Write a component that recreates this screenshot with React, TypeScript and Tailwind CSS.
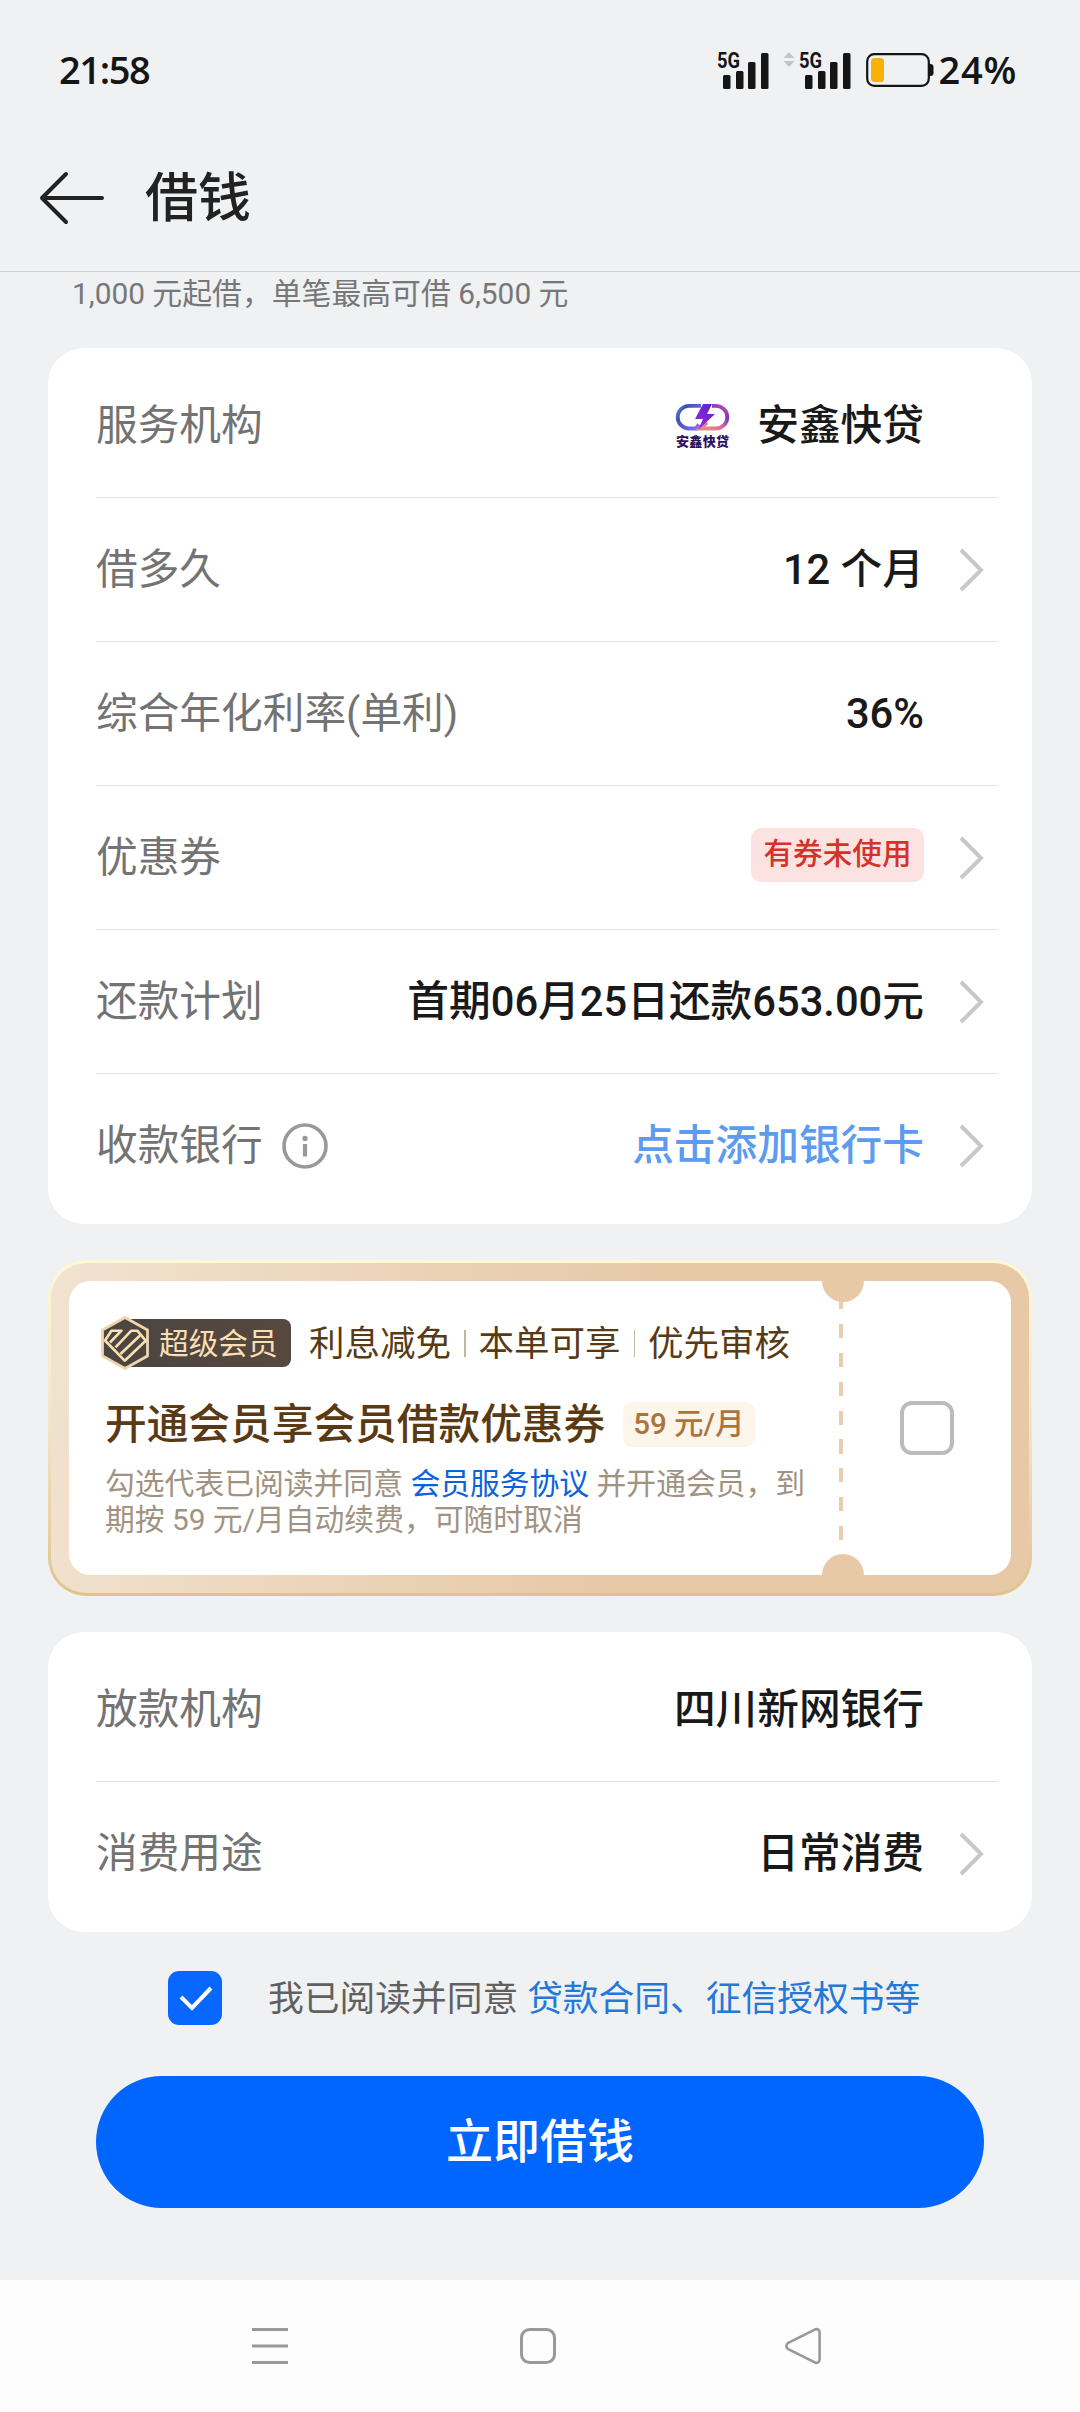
import React from "react";
import { twMerge } from "tailwind-merge";

function SignalIcon() {
  return (
    <svg width="54" height="40" viewBox="0 0 54 40" className="shrink-0 overflow-visible">
      <text
        x="0"
        y="18"
        textLength="23"
        lengthAdjust="spacingAndGlyphs"
        className="fill-[#151515] font-['Roboto',sans-serif] text-[22px] font-bold leading-none"
      >
        5G
      </text>
      <g fill="#151515">
        <rect x="6" y="25" width="7.5" height="14" rx="1.5" />
        <rect x="19" y="21" width="7.5" height="18" rx="1.5" />
        <rect x="31" y="12" width="7.5" height="27" rx="1.5" />
        <rect x="44" y="3" width="7.5" height="36" rx="1.5" />
      </g>
    </svg>
  );
}

function DataArrows() {
  return (
    <svg width="12" height="16" viewBox="0 0 12 16" className="mb-5 shrink-0">
      <path d="M6 0l5.5 6H.5zM6 15L.5 9h11z" fill="#c4c4c6" />
    </svg>
  );
}

function BatteryIcon() {
  return (
    <svg width="68" height="36" viewBox="0 0 68 36" className="shrink-0">
      <rect
        x="1.2"
        y="2.2"
        width="61.6"
        height="31.6"
        rx="7"
        fill="none"
        stroke="#151515"
        strokeWidth="2.2"
      />
      <path d="M63 12h1.5a3 3 0 0 1 3 3v6a3 3 0 0 1-3 3H63z" fill="#151515" />
      <rect x="5" y="6" width="13" height="24" rx="3.5" fill="#fbb103" />
    </svg>
  );
}

function StatusBar() {
  return (
    <div className="flex h-[140px] items-center justify-between pl-[59px] pr-[63px] font-['Open_Sans','Noto_Sans',sans-serif] text-[38px] font-semibold leading-none text-[#151515]">
      <span className="-mt-[3px] tracking-[-1.4px]">21:58</span>
      <div className="flex items-center">
        <SignalIcon />
        <div className="ml-3 mr-[13px] flex items-center gap-1">
          <DataArrows />
          <SignalIcon />
        </div>
        <BatteryIcon />
        <span className="-mt-[2px] ml-[5px] tracking-[0.7px]">24%</span>
      </div>
    </div>
  );
}

function Header() {
  return (
    <header className="flex h-[132px] items-center gap-[39px] border-b border-[#cdced0] pb-[16px] pl-[38px]">
      <svg
        width="68"
        height="56"
        viewBox="0 0 68 56"
        fill="none"
        stroke="#222"
        strokeWidth="4"
        strokeLinecap="round"
        strokeLinejoin="round"
      >
        <path d="M28 4L4 28l24 24M4 28h60" />
      </svg>
      <h1 className="pt-[3px] text-[53px] font-medium leading-none text-[#222]">借钱</h1>
    </header>
  );
}

function Chevron() {
  return (
    <svg
      width="26"
      height="44"
      viewBox="0 0 26 44"
      fill="none"
      stroke="#c8c8c8"
      strokeWidth="4"
      className="shrink-0"
    >
      <path d="M2 2l20 20L2 42" />
    </svg>
  );
}

function InfoIcon() {
  return (
    <svg width="46" height="46" viewBox="0 0 46 46">
      <circle cx="23" cy="23" r="21" fill="none" stroke="#999" strokeWidth="3.6" />
      <circle cx="23" cy="15.5" r="2.7" fill="#999" />
      <rect x="20.9" y="21" width="4.2" height="12.5" fill="#999" />
    </svg>
  );
}

function OrgLogo() {
  return (
    <svg width="64" height="64" viewBox="0 -6 64 64" className="mr-[22px]">
      <defs>
        <linearGradient id="ringLeft" x1="0" y1="0" x2="1" y2="0.6">
          <stop offset="0" stopColor="#5aa0e8" />
          <stop offset="0.25" stopColor="#3c4fb0" />
          <stop offset="1" stopColor="#7f6df0" />
        </linearGradient>
        <linearGradient id="ringRight" x1="1" y1="0" x2="0.3" y2="1">
          <stop offset="0" stopColor="#c850b0" />
          <stop offset="0.35" stopColor="#7a35b8" />
          <stop offset="0.7" stopColor="#d8689c" />
          <stop offset="1" stopColor="#e08a8a" />
        </linearGradient>
        <linearGradient id="bolt" x1="1" y1="0" x2="0" y2="1">
          <stop offset="0" stopColor="#5a22c8" />
          <stop offset="1" stopColor="#9a2be0" />
        </linearGradient>
      </defs>
      <path
        d="M30 5.9H18a11.3 11.3 0 0 0 0 22.6h7l3-4"
        fill="none"
        stroke="url(#ringLeft)"
        strokeWidth="3.8"
      />
      <path
        d="M41 5.9h4a11.3 11.3 0 0 1 0 22.6H29l7-6"
        fill="none"
        stroke="url(#ringRight)"
        strokeWidth="3.8"
      />
      <path d="M32 4h9l-5 10h8L27 30l5-11h-8z" fill="url(#bolt)" />
      <text
        x="5"
        y="45.5"
        textLength="53"
        className="fill-[#2e1460] text-[13px] font-black"
      >
        安鑫快贷
      </text>
    </svg>
  );
}

interface RowProps {
  label: string;
  value: React.ReactNode;
  icon?: React.ReactNode;
  arrow?: boolean;
  valueClass?: string;
}

function Row({ label, value, icon, arrow = false, valueClass }: RowProps) {
  return (
    <div className="flex h-[144px] items-center border-b border-[#e3e3e3] text-[41.7px] leading-none last:border-b-0">
      <div className="flex items-center gap-[19px] text-[#737373]">
        <span>{label}</span>
        {icon}
      </div>
      <div
        className={twMerge(
          "ml-auto flex items-center font-medium text-[#191919]",
          valueClass,
        )}
      >
        {value}
      </div>
      <div className="flex w-[74px] shrink-0 pl-[35px]">
        {arrow && <Chevron />}
      </div>
    </div>
  );
}

function Card({ children }: { children: React.ReactNode }) {
  return (
    <section className="mx-12 rounded-[36px] bg-white pb-[6px] pl-12 pr-[34px] pt-[6px]">
      {children}
    </section>
  );
}

function MemberBadge() {
  return (
    <div className="flex items-center">
      <svg width="50" height="56" viewBox="0 0 50 56" className="relative z-10 shrink-0">
        <path
          d="M25 2.5L47.5 15v26L25 53.5 2.5 41V15z"
          fill="#4c4641"
          stroke="#f0d5ac"
          strokeWidth="2.8"
          strokeLinejoin="round"
        />
        <g fill="none" stroke="#fadfb4" strokeWidth="2.6" strokeLinejoin="round">
          <path d="M10 27.5L21.5 15.7H11.5L5 25.5l19.7 20.2 21-20-8.4-10H31.3L15.5 32.3" />
          <path d="M40 20.5L20.5 39" />
        </g>
      </svg>
      <div className="-ml-6 flex h-12 w-[165px] items-center rounded-r-[8px] bg-linear-to-r from-[#4a4541] to-[#58483f] pl-[33px] text-[29.7px] leading-none text-[#fadfb4]">
        <span className="pt-[1px]">超级会员</span>
      </div>
    </div>
  );
}

const PERKS = ["利息减免", "本单可享", "优先审核"];

function MemberCoupon() {
  return (
    <section className="mx-12 mt-9 h-[336px] rounded-[38px] bg-linear-to-b from-[#fdf9d6] via-[#f3e4c8] to-[#dfc389] p-[3px]">
      <div className="h-full rounded-[35px] bg-linear-100 from-[#f1e3d1] via-[#ebd3b7] via-35% to-[#e7c8a7] to-60% px-[18px] py-[18px]">
        <div className="relative flex h-full overflow-hidden rounded-[21px] bg-white">
          <div className="w-[770px] pl-[36px] pt-[34px]">
            <div className="-ml-[5px] flex h-[56px] items-center">
              <MemberBadge />
              <div className="ml-[18px] flex items-center text-[35.5px] leading-none text-[#583b14]">
                {PERKS.map((perk) => (
                  <React.Fragment key={perk}>
                    {perk !== PERKS[0] && (
                      <i className="mx-[13px] h-[27px] w-[1.5px] bg-[#c3b6a6]" />
                    )}
                    <span className="pt-[3px]">{perk}</span>
                  </React.Fragment>
                ))}
              </div>
            </div>
            <div className="mt-[29px] flex h-[48px] items-center text-[41.7px] font-medium leading-none text-[#5a3a13]">
              <span className="whitespace-nowrap pt-[2px]">开通会员享会员借款优惠券</span>
              <span className="ml-[18px] flex h-[45px] items-center whitespace-nowrap rounded-[9px] bg-[#fcf5e9] px-[10px] pt-[1px] text-[29.5px] text-[#ab743f]">
                59 元/月
              </span>
            </div>
            <p className="mt-[18px] whitespace-nowrap text-[29.8px] leading-9 text-[#a19282]">
              勾选代表已阅读并同意 <span className="text-[#0a62dd]">会员服务协议</span>{" "}
              并开通会员，到
              <br />
              期按 59 元/月自动续费，可随时取消
            </p>
          </div>
          <div className="mb-[35px] mt-[14px] w-[4px] bg-[repeating-linear-gradient(to_bottom,#e9cdaf_0_14px,transparent_14px_28.9px)]" />
          <div className="flex flex-1 items-center justify-center">
            <div className="size-[54px] rounded-[12px] border-4 border-[#bbb]" />
          </div>
          <i className="absolute -top-[21px] left-[753px] size-[42px] rounded-full bg-[#e7c8a7]" />
          <i className="absolute -bottom-[21px] left-[753px] size-[42px] rounded-full bg-[#e7c8a7]" />
        </div>
      </div>
    </section>
  );
}

function Agreement() {
  return (
    <div className="mt-[39px] flex h-[54px] items-center pl-[168px]">
      <div className="flex size-[54px] items-center justify-center rounded-[11px] bg-[#0767ff] pl-[2px]">
        <svg width="34" height="26" viewBox="0 0 34 26" fill="none" stroke="#fff" strokeWidth="4">
          <path d="M2 12l11 11L32 3" />
        </svg>
      </div>
      <p className="ml-[46px] whitespace-nowrap pt-[3px] text-[35.75px] leading-none text-[#606060]">
        我已阅读并同意 <span className="text-[#2478d9]">贷款合同、征信授权书等</span>
      </p>
    </div>
  );
}

function NavBar() {
  return (
    <nav className="mt-auto flex h-[132px] items-center bg-[#fcfcfc] pl-[250px]">
      <svg width="572" height="40" viewBox="0 0 572 40" fill="none" stroke="#999" strokeWidth="3">
        <path d="M2 3.5h36M2 20h36M2 36.5h36" />
        <rect x="271.5" y="3.5" width="33" height="33" rx="8" />
        <path
          d="M537.8 17.2l26.5-13.4c2.5-1.5 5.3-.2 5.3 2.6v27.2c0 2.8-2.8 4.1-5.3 2.6l-26.5-13.4c-2-1.4-2-4.2 0-5.6z"
          strokeWidth="2.6"
        />
      </svg>
    </nav>
  );
}

export default function App() {
  return (
    <main
      lang="zh-CN"
      className="flex h-[2412px] w-[1080px] flex-col overflow-hidden bg-[#eff1f3] font-['Roboto','Noto_Sans_CJK_SC',sans-serif]"
    >
      <StatusBar />
      <Header />
      <p className="mb-[37px] ml-[72px] mt-[4px] h-[35px] text-[29.85px] leading-[35px] text-[#777]">
        1,000 元起借，单笔最高可借 6,500 元
      </p>
      <Card>
        <Row
          label="服务机构"
          value={
            <>
              <OrgLogo />
              <span>安鑫快贷</span>
            </>
          }
        />
        <Row label="借多久" value="12 个月" arrow />
        <Row label="综合年化利率(单利)" value="36%" />
        <Row
          label="优惠券"
          value="有券未使用"
          arrow
          valueClass="mb-[6px] h-[54px] rounded-[10px] bg-[#fce3e2] px-[12.5px] text-[29.6px] text-[#d2332a]"
        />
        <Row label="还款计划" value="首期06月25日还款653.00元" arrow />
        <Row
          label="收款银行"
          icon={<InfoIcon />}
          value="点击添加银行卡"
          arrow
          valueClass="text-[#5c9bf0]"
        />
      </Card>
      <MemberCoupon />
      <div className="mt-9">
        <Card>
          <Row label="放款机构" value="四川新网银行" />
          <Row label="消费用途" value="日常消费" arrow />
        </Card>
      </div>
      <Agreement />
      <button className="mx-24 mt-[51px] h-[132px] shrink-0 rounded-full bg-[#0066ff] pb-[2px] text-[47px] font-medium leading-none text-white">
        立即借钱
      </button>
      <NavBar />
    </main>
  );
}
